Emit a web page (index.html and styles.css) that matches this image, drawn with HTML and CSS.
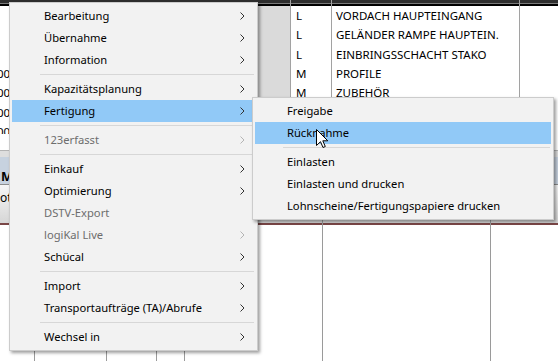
FILE: index.html
```html
<!DOCTYPE html>
<html lang="de">
<head>
<meta charset="utf-8">
<title>Kontextmenü</title>
<link rel="stylesheet" href="styles.css">
</head>
<body>
<div class="screen">
  <section class="grid-top">
    <div class="col c-num">
      <div class="hd"></div>
      <div class="rows">
        <div class="cell"></div>
        <div class="cell"></div>
        <div class="cell"></div>
        <div class="cell num">0000</div>
        <div class="cell num">0000</div>
        <div class="cell num">0000</div>
        <div class="cell num">0000</div>
      </div>
    </div>
    <div class="col c-gray">
      <div class="hd"></div>
      <div class="rows gray"></div>
    </div>
    <div class="col c-type line">
      <div class="hd"></div>
      <div class="rows">
        <div class="cell">L</div>
        <div class="cell">L</div>
        <div class="cell">L</div>
        <div class="cell">M</div>
        <div class="cell">M</div>
        <div class="cell"></div>
        <div class="cell"></div>
      </div>
    </div>
    <div class="col c-desc line">
      <div class="hd"></div>
      <div class="rows">
        <div class="cell">VORDACH HAUPTEINGANG</div>
        <div class="cell">GELÄNDER RAMPE HAUPTEIN.</div>
        <div class="cell">EINBRINGSSCHACHT STAKO</div>
        <div class="cell">PROFILE</div>
        <div class="cell">ZUBEHÖR</div>
        <div class="cell"></div>
        <div class="cell"></div>
      </div>
    </div>
    <div class="col c-rest line">
      <div class="hd"></div>
      <div class="rows"></div>
    </div>
  </section>
  <div class="split"></div>
  <section class="grid-bottom">
    <div class="bcol w1"><div class="h1">Menge</div><div class="h2">otto</div><div class="body"></div></div>
    <div class="bcol w2"><div class="h1"></div><div class="h2"></div><div class="body"></div></div>
    <div class="bcol w3"><div class="h1"></div><div class="h2"></div><div class="body"></div></div>
    <div class="bcol w4"><div class="h1"></div><div class="h2"></div><div class="body"></div></div>
    <div class="bcol w5"><div class="h1"></div><div class="h2"></div><div class="body"></div></div>
    <div class="bcol w6"><div class="h1"></div><div class="h2"></div><div class="body"></div></div>
    <div class="bcol w7"><div class="h1"></div><div class="h2"></div><div class="body"></div></div>
  </section>

  <div class="menu main">
    <div class="item"><span class="label">Bearbeitung</span><svg class="arr" viewBox="0 0 5 8"><path d="M0.5 0.5 L4 4 L0.5 7.5"/></svg></div>
    <div class="item"><span class="label">Übernahme</span><svg class="arr" viewBox="0 0 5 8"><path d="M0.5 0.5 L4 4 L0.5 7.5"/></svg></div>
    <div class="item"><span class="label">Information</span><svg class="arr" viewBox="0 0 5 8"><path d="M0.5 0.5 L4 4 L0.5 7.5"/></svg></div>
    <div class="sep"></div>
    <div class="item"><span class="label">Kapazitätsplanung</span><svg class="arr" viewBox="0 0 5 8"><path d="M0.5 0.5 L4 4 L0.5 7.5"/></svg></div>
    <div class="item hl"><span class="label">Fertigung</span><svg class="arr" viewBox="0 0 5 8"><path d="M0.5 0.5 L4 4 L0.5 7.5"/></svg></div>
    <div class="sep"></div>
    <div class="item dis"><span class="label">123erfasst</span><svg class="arr" viewBox="0 0 5 8"><path d="M0.5 0.5 L4 4 L0.5 7.5"/></svg></div>
    <div class="sep"></div>
    <div class="item"><span class="label">Einkauf</span><svg class="arr" viewBox="0 0 5 8"><path d="M0.5 0.5 L4 4 L0.5 7.5"/></svg></div>
    <div class="item"><span class="label">Optimierung</span><svg class="arr" viewBox="0 0 5 8"><path d="M0.5 0.5 L4 4 L0.5 7.5"/></svg></div>
    <div class="item dis"><span class="label">DSTV-Export</span></div>
    <div class="item dis"><span class="label">logiKal Live</span><svg class="arr" viewBox="0 0 5 8"><path d="M0.5 0.5 L4 4 L0.5 7.5"/></svg></div>
    <div class="item"><span class="label">Schücal</span><svg class="arr" viewBox="0 0 5 8"><path d="M0.5 0.5 L4 4 L0.5 7.5"/></svg></div>
    <div class="sep"></div>
    <div class="item"><span class="label">Import</span><svg class="arr" viewBox="0 0 5 8"><path d="M0.5 0.5 L4 4 L0.5 7.5"/></svg></div>
    <div class="item"><span class="label">Transportaufträge (TA)/Abrufe</span><svg class="arr" viewBox="0 0 5 8"><path d="M0.5 0.5 L4 4 L0.5 7.5"/></svg></div>
    <div class="sep"></div>
    <div class="item"><span class="label">Wechsel in</span><svg class="arr" viewBox="0 0 5 8"><path d="M0.5 0.5 L4 4 L0.5 7.5"/></svg></div>
  </div>

  <div class="menu sub">
    <div class="item"><span class="label">Freigabe</span></div>
    <div class="item hl"><span class="label">Rücknahme</span></div>
    <div class="sep"></div>
    <div class="item"><span class="label">Einlasten</span></div>
    <div class="item"><span class="label">Einlasten und drucken</span></div>
    <div class="item"><span class="label">Lohnscheine/Fertigungspapiere drucken</span></div>
  </div>

  <svg class="cursor" width="13" height="20" viewBox="0 0 13 20">
    <path d="M0.5 0.5 L0.5 16.5 L4.5 12.7 L7 18.5 L9.3 17.5 L6.8 11.8 L11.8 11.8 Z" fill="#fff" stroke="#000" stroke-width="1" stroke-linejoin="miter"/>
  </svg>
</div>
</body>
</html>
```

FILE: styles.css
```css
* { box-sizing: border-box; }
html, body { margin: 0; padding: 0; }
body {
  width: 558px;
  height: 361px;
  overflow: hidden;
  background: #fff;
  font-family: "Noto Sans", "Open Sans", sans-serif;
}
.screen {
  position: relative;
  width: 558px;
  height: 361px;
  overflow: hidden;
  background: #fff;
}

/* upper grid */
.grid-top { display: flex; height: 150px; }
.col { display: flex; flex-direction: column; }
.c-num { width: 200px; }
.c-gray { width: 90px; }
.c-type { width: 41px; }
.c-desc { width: 188px; }
.c-rest { flex: 1; }
.line { border-left: 1px solid #a2a2a2; }
.hd {
  height: 6px;
  flex: none;
  background: linear-gradient(#2e2e2e 0 3px, #7a7a7a 3px 4px, #000 4px 6px);
}
.rows {
  height: 128px;
  overflow: hidden;
  display: flex;
  flex-direction: column;
}
.rows.gray { background: #dadada; }
.cell {
  flex: none;
  height: 19.33px;
  line-height: 19.33px;
  font-size: 11.5px;
  color: #000;
  white-space: nowrap;
}
.c-type .cell { padding-left: 5px; }
.c-desc .cell { padding-left: 4px; }
.cell.num { text-indent: -3px; }

.split {
  height: 7px;
  border-top: 1px solid #b4b4b4;
  background: #dedede;
}

/* lower grid */
.grid-bottom { display: flex; height: 204px; }
.bcol { display: flex; flex-direction: column; }
.bcol + .bcol { border-left: 1px solid #9a9a9a; }
.w1 { width: 34px; }
.w2 { width: 72px; }
.w3 { width: 50px; }
.w4 { width: 28px; }
.w5 { width: 138px; }
.w6 { width: 168px; }
.w7 { flex: 1; }
.h1 {
  height: 28px;
  flex: none;
  background: #c7d2df;
  border-bottom: 1px solid #8e8e8e;
  font-size: 13px;
  font-weight: 700;
  line-height: 16px;
  padding: 11px 0 0 1px;
  white-space: nowrap;
  overflow: hidden;
}
.h2 {
  height: 40px;
  flex: none;
  background: linear-gradient(#f6f6f6, #d6d6d6);
  border-bottom: 2px solid #7a4646;
  font-size: 12px;
  line-height: 16px;
  padding: 5px 0 0 0;
  white-space: nowrap;
  overflow: hidden;
}
.body { flex: 1; background: #fff; }

/* menus */
.menu {
  position: absolute;
  background: #f2f2f2;
  border: 1px solid #cccccc;
  padding: 2px;
  box-shadow: 2px 2px 3px rgba(0, 0, 0, 0.38);
  font-size: 11.2px;
  color: #000;
}
.menu.main { left: 9px; top: 2px; width: 249px; height: 349px; }
.menu.sub { left: 252px; top: 97px; width: 302px; height: 123px; }
.item {
  display: flex;
  align-items: center;
  height: 22px;
  padding-left: 32px;
}
.label {
  flex: 1;
  line-height: 21px;
  padding-bottom: 1px;
  white-space: nowrap;
}
.item.hl { background: #91c9f7; }
.item.dis { color: #6d6d6d; }
.arr {
  width: 5px;
  height: 8px;
  margin-right: 10px;
  flex: none;
}
.arr path { fill: none; stroke: #333; stroke-width: 1; }
.item.dis .arr path { stroke: #b4b4b4; }
.sep { height: 7px; padding: 3px 1px 3px 28px; }
.sep::after { content: ""; display: block; height: 1px; background: #d7d7d7; }

.cursor {
  position: absolute;
  left: 316px;
  top: 129px;
}
```
